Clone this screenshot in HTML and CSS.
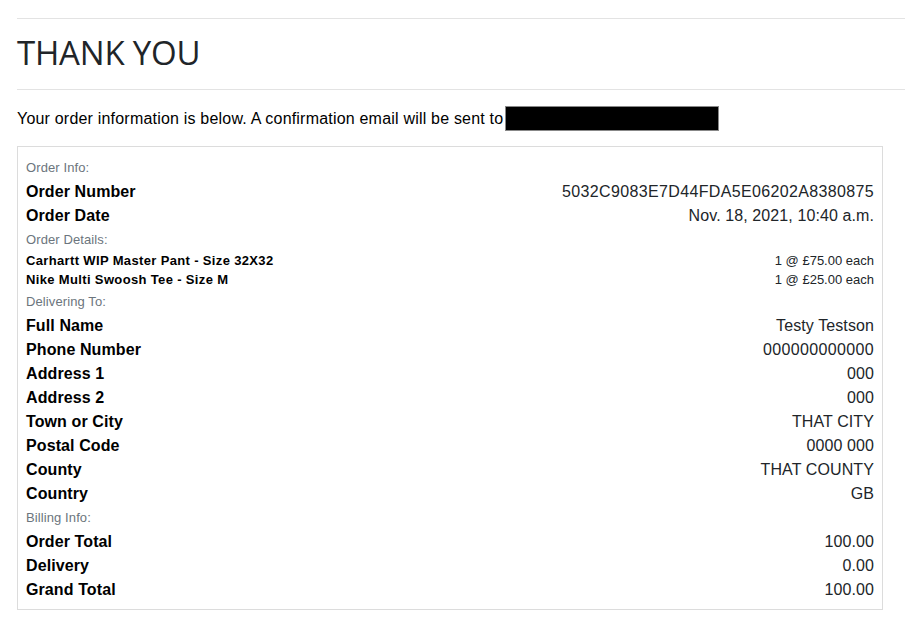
FILE: index.html
```html
<!DOCTYPE html>
<html lang="en">
<head>
<meta charset="utf-8">
<title>Thank You</title>
<link rel="stylesheet" href="styles.css">
</head>
<body>
<div class="page">
  <hr class="rule">
  <h1 class="title">THANK YOU</h1>
  <hr class="rule">
  <p class="intro">Your order information is below. A confirmation email will be sent to<span class="redacted"></span></p>
  <div class="card">
    <div class="section-label first">Order Info:</div>
    <div class="row"><span class="key">Order Number</span><span class="val code">5032C9083E7D44FDA5E06202A8380875</span></div>
    <div class="row"><span class="key">Order Date</span><span class="val">Nov. 18, 2021, 10:40 a.m.</span></div>
    <div class="section-label">Order Details:</div>
    <div class="row item"><span class="key">Carhartt WIP Master Pant - Size 32X32</span><span class="val">1 @ £75.00 each</span></div>
    <div class="row item"><span class="key">Nike Multi Swoosh Tee - Size M</span><span class="val">1 @ £25.00 each</span></div>
    <div class="section-label">Delivering To:</div>
    <div class="row"><span class="key">Full Name</span><span class="val">Testy Testson</span></div>
    <div class="row"><span class="key">Phone Number</span><span class="val code">000000000000</span></div>
    <div class="row"><span class="key">Address 1</span><span class="val">000</span></div>
    <div class="row"><span class="key">Address 2</span><span class="val">000</span></div>
    <div class="row"><span class="key">Town or City</span><span class="val">THAT CITY</span></div>
    <div class="row"><span class="key">Postal Code</span><span class="val">0000 000</span></div>
    <div class="row"><span class="key">County</span><span class="val">THAT COUNTY</span></div>
    <div class="row"><span class="key">Country</span><span class="val">GB</span></div>
    <div class="section-label">Billing Info:</div>
    <div class="row"><span class="key">Order Total</span><span class="val">100.00</span></div>
    <div class="row"><span class="key">Delivery</span><span class="val">0.00</span></div>
    <div class="row"><span class="key">Grand Total</span><span class="val">100.00</span></div>
  </div>
</div>
</body>
</html>
```

FILE: styles.css
```css
* { box-sizing: border-box; }
html, body { margin: 0; padding: 0; background: #fff; }
body {
  font-family: "Liberation Sans", Arial, sans-serif;
  font-size: 16px;
  line-height: 1.5;
  color: #000;
  letter-spacing: 0.2px;
}
.page {
  padding: 0 0 0 17px;
}
.rule {
  border: 0;
  border-top: 1px solid #e3e3e3;
  margin: 18px 0 0 0;
  height: 0;
}
.title {
  font-family: "Open Sans", "Liberation Sans", sans-serif;
  font-weight: 400;
  font-size: 33px;
  line-height: 40px;
  letter-spacing: -0.2px;
  color: #212529;
  margin: 14px 0 16px;
}
.title + .rule { margin-top: 0; }
.intro {
  margin: 16px 0 15px;
  line-height: 24px;
  display: flex;
  align-items: center;
}
.redacted {
  display: inline-block;
  width: 214px;
  height: 25px;
  background: #000;
  border: 1px solid #888;
  margin-left: 2px;
}
.card {
  width: 866px;
  border: 1px solid #dcdcdc;
  padding: 7px 8px 9px;
  color: #212529;
}
.section-label {
  font-size: 13px;
  line-height: 21px;
  margin-top: 3px;
  color: #6c757d;
  letter-spacing: 0.1px;
}
.row {
  display: flex;
  justify-content: space-between;
  line-height: 21px;
  padding-top: 3px;
}
.key { font-weight: 700; color: #000; letter-spacing: 0.1px; }
.val { text-align: right; letter-spacing: 0.1px; }
.val.code { letter-spacing: 0.35px; }
.row.item {
  font-size: 13px;
  line-height: 17px;
  padding-top: 2px;
}
.row.item .key { letter-spacing: 0.35px; }
.row.item .val { letter-spacing: 0; }
```
